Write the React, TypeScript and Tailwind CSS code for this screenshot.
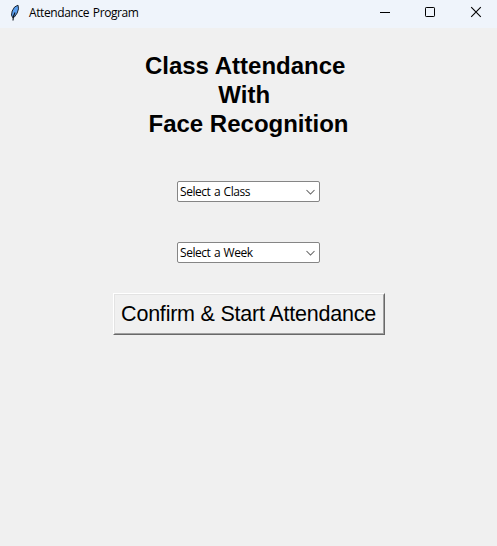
import React from "react";

function Feather() {
  return (
    <svg width="12" height="18" viewBox="0 0 12 18" className="mt-[-2px] shrink-0">
      <path d="M3.6 13.6 L2.5 11 L3.2 7 L5.6 3 L9 1.2 L9.5 4.8 L8.2 9 L5.4 13 Z" fill="#5a9ff0" stroke="#1a2431" strokeWidth="1" />
      <path d="M4 16.5 L4.4 12.5 L6 8.5" fill="none" stroke="#0c121c" strokeWidth="1.1" />
    </svg>
  );
}

function TitleBar() {
  return (
    <header className="flex h-7 items-center bg-[#eff4fb] pl-[9px]">
      <Feather />
      <span className="ml-2 mt-[-2px] whitespace-nowrap font-['Open_Sans',sans-serif] text-[12px] leading-4 tracking-[-0.4px] [word-spacing:1px] text-black">
        Attendance Program
      </span>
      <div className="ml-auto flex h-full text-black">
        <svg width="45" height="28" viewBox="0 0 45 28" shapeRendering="crispEdges">
          <path d="M18 12.5H28" stroke="currentColor" />
        </svg>
        <svg width="45" height="28" viewBox="0 0 45 28">
          <rect x="18.5" y="7.5" width="9" height="9" rx="0.7" fill="none" stroke="currentColor" />
        </svg>
        <svg width="45" height="28" viewBox="0 0 45 28">
          <path d="M19.2 7.2L28.8 16.8M28.8 7.2L19.2 16.8" stroke="currentColor" strokeWidth="1.1" fill="none" />
        </svg>
      </div>
    </header>
  );
}

function Combo({ label }: { label: string }) {
  return (
    <button className="flex h-[21px] w-[143px] items-center rounded-[2px] border border-[#858585] bg-white pl-[2px] pr-[3px]">
      <span className="whitespace-nowrap font-['Open_Sans',sans-serif] text-[12px] leading-4 tracking-[-0.45px] [word-spacing:0.8px] text-black">{label}</span>
      <svg width="11" height="7" viewBox="0 0 11 7" className="ml-auto mt-px">
        <path d="M1.5 1L5.5 5L9.5 1" fill="none" stroke="#606060" strokeWidth="1.05" />
      </svg>
    </button>
  );
}

export default function App() {
  return (
    <div className="flex h-[546px] w-[497px] flex-col overflow-hidden bg-[#f0f0f0]">
      <TitleBar />
      <main className="flex flex-col items-center">
        <h1 className="mt-[23px] whitespace-pre text-center font-['Liberation_Sans',Arial,sans-serif] text-[24px] font-bold leading-[29px] text-black">
          <span className="block">{"Class Attendance "}</span>
          <span className="block pr-[2px]">{"With "}</span>
          <span className="block">Face Recognition</span>
        </h1>
        <div className="mt-[43px] flex flex-col gap-10">
          <Combo label="Select a Class" />
          <Combo label="Select a Week" />
        </div>
        <button className="mt-[30px] flex h-[42px] w-[272px] border border-b-[#696969] border-l-white border-r-[#696969] border-t-white">
          <span className="flex h-full w-full items-center justify-center whitespace-nowrap border border-b-[#a0a0a0] border-l-[#e3e3e3] border-r-[#a0a0a0] border-t-[#e3e3e3] font-['Liberation_Sans',Arial,sans-serif] text-[21.5px] leading-6 tracking-[-0.22px] text-black">
            Confirm &amp; Start Attendance
          </span>
        </button>
      </main>
    </div>
  );
}
